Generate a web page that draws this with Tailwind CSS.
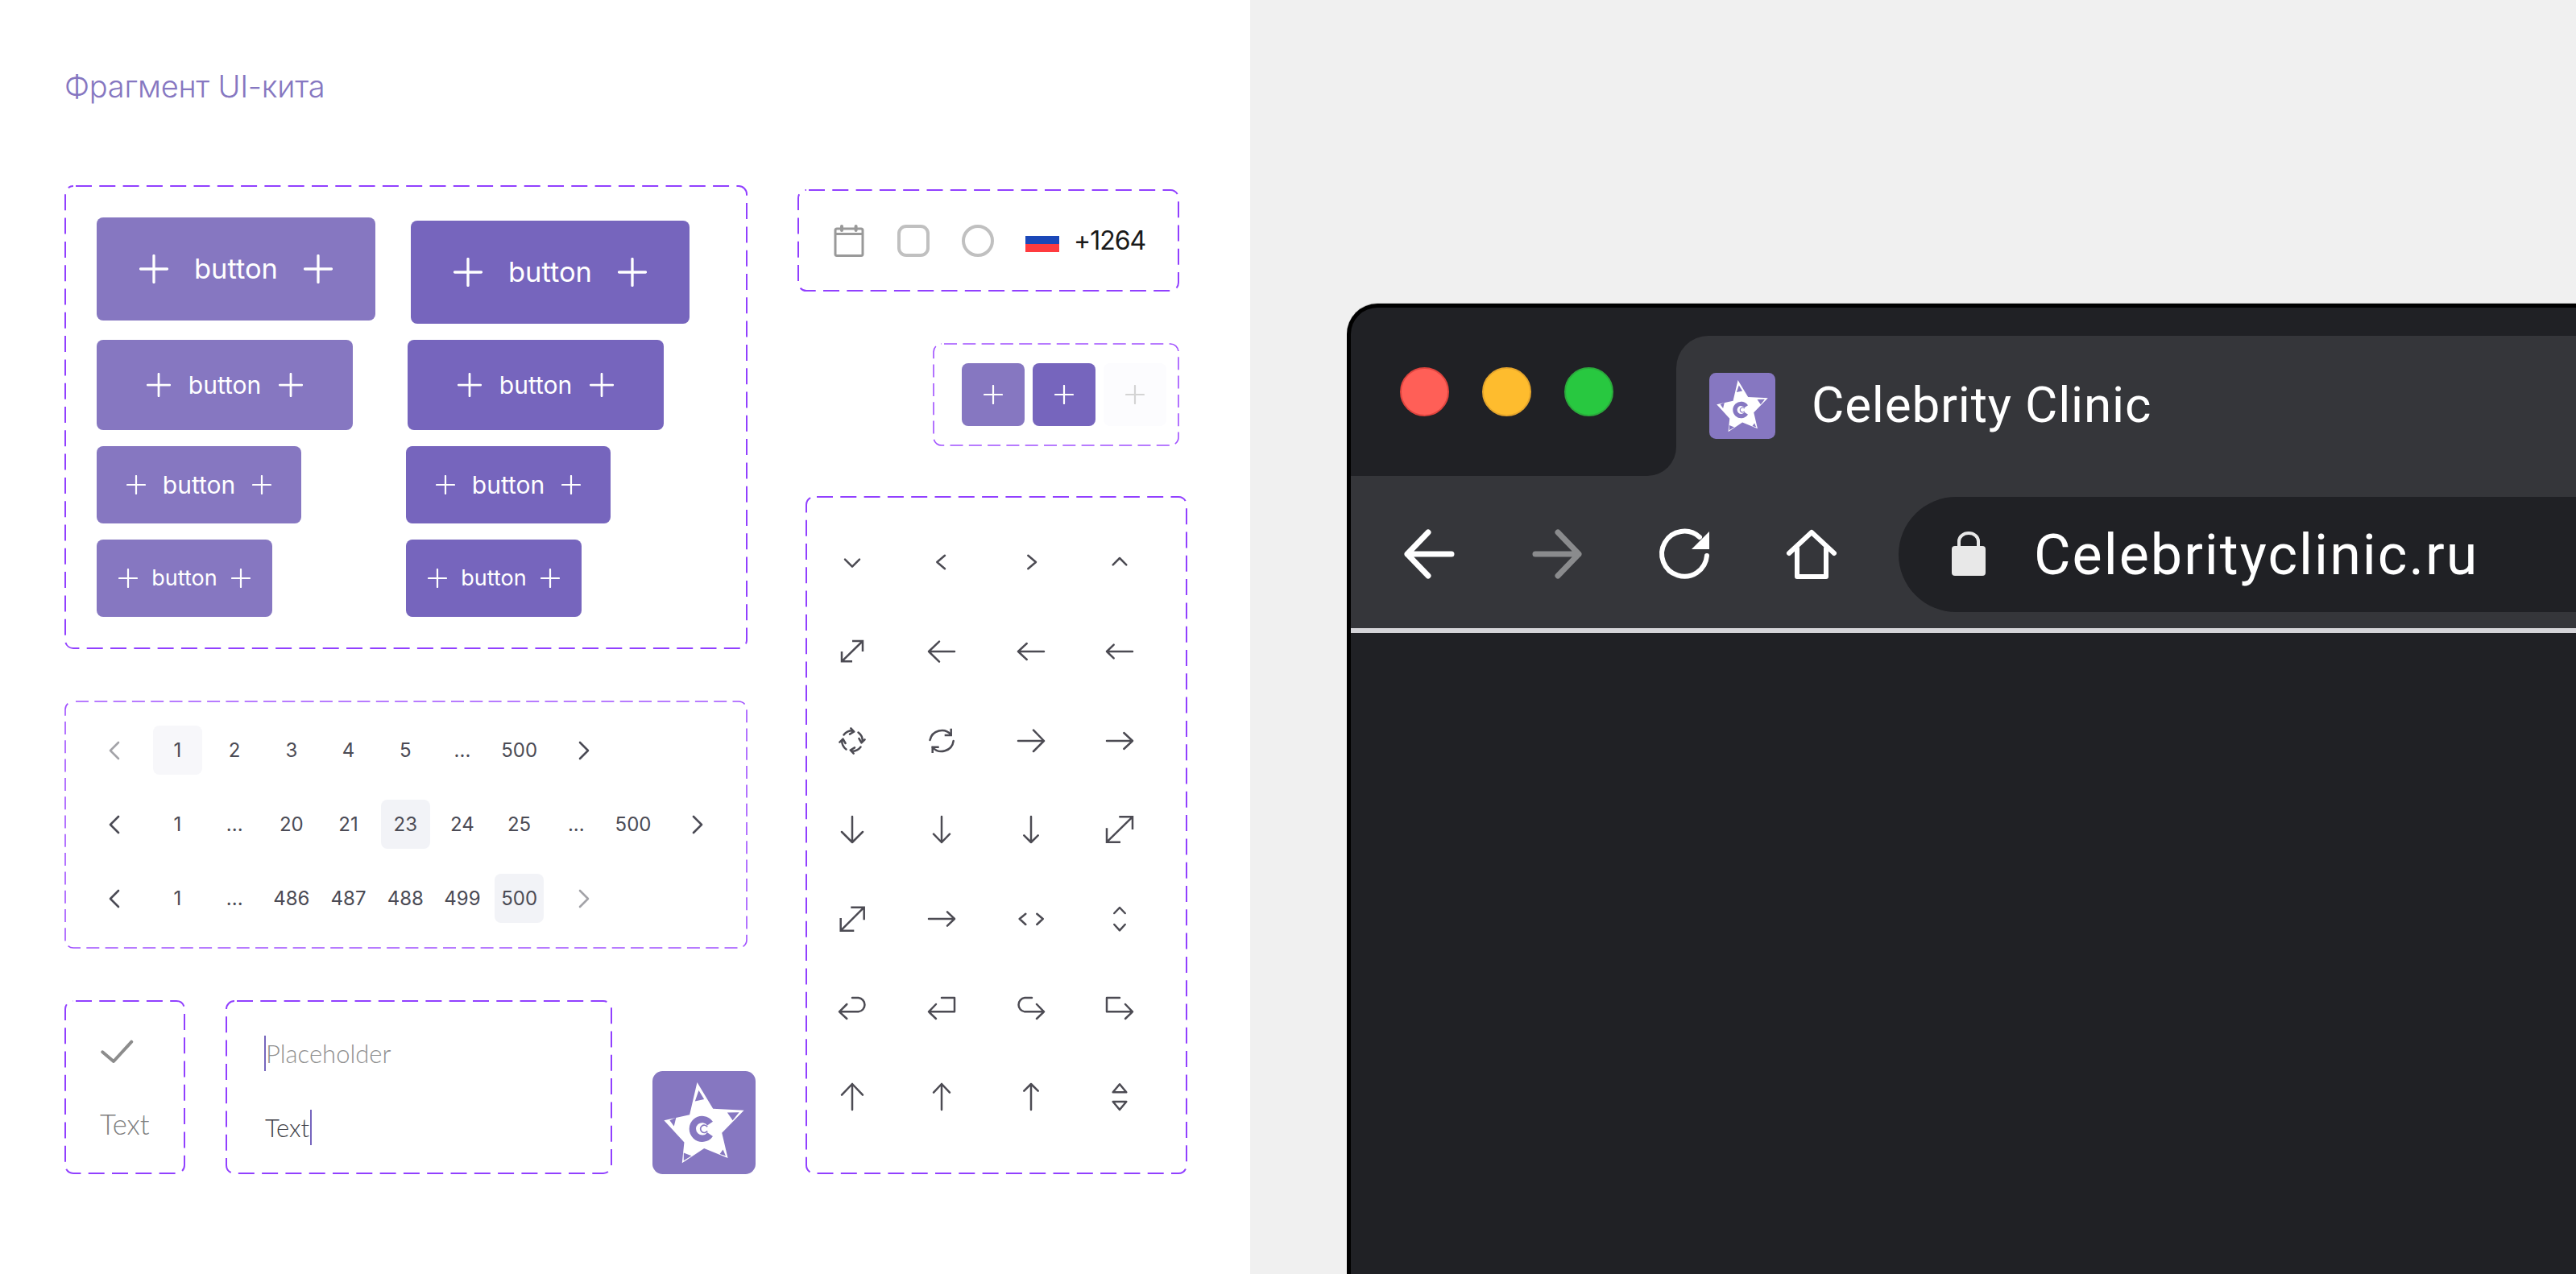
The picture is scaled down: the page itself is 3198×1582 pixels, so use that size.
<!DOCTYPE html>
<html lang="ru">
<head>
  <meta charset="UTF-8" />
  <title>Фрагмент UI-кита</title>
  <script src="https://cdn.jsdelivr.net/npm/@tailwindcss/browser@4"></script>
</head>
<body class="bg-white font-['Inter',sans-serif]">

  <!-- shared icons -->
  <svg class="absolute w-0 h-0">
    <symbol id="plus" viewBox="0 0 24 24"><path d="M12 1V23M1 12H23" fill="none" stroke="currentColor" stroke-width="2.2" stroke-linecap="round"/></symbol>
    <symbol id="prev" viewBox="0 0 61 61"><path d="M36 21L26 31L36 41" fill="none" stroke="currentColor" stroke-width="2.6" stroke-linecap="round" stroke-linejoin="round"/></symbol>
    <symbol id="next" viewBox="0 0 61 61"><path d="M26 21L36 31L26 41" fill="none" stroke="currentColor" stroke-width="2.6" stroke-linecap="round" stroke-linejoin="round"/></symbol>
    <symbol id="logo" viewBox="0 0 383 383">
      <rect width="383" height="383" rx="38" fill="#8677c1"/>
      <path d="M166 42L225 140L340 146L258 230L280 323L192 287L110 342L118 265L43 183L138 162Z" fill="#fff"/>
      <path d="M172 72L158 112L192 105ZM278 154L322 153L298 183ZM64 183L88 172L80 205ZM116 304L116 333L145 315ZM250 308L272 315L262 292Z" fill="#8677c1"/>
      <path d="M214 195A35.5 35.5 0 1 0 214 235" fill="none" stroke="#8677c1" stroke-width="25"/>
      <path d="M204 207A14 14 0 1 0 204 223" fill="none" stroke="#8677c1" stroke-width="5"/>
    </symbol>
  </svg>

  <div class="flex w-[3198px] h-[1582px] overflow-hidden">

    <!-- UI kit sheet -->
    <div class="w-[1552px] shrink-0 pl-[80px] pt-[80px] bg-white">
      <h1 class="h-[150px] pt-[2px] leading-[50px] text-[38px] font-light tracking-[-0.25px] text-[#8677c1]">Фрагмент UI-кита</h1>

      <div class="flex">
        <div class="w-[910px] shrink-0">

          <!-- buttons -->
          <div class="relative w-[848px] h-[576px] pl-[40px] pt-[40px] flex flex-col gap-[20px]">
            <svg class="absolute inset-0" width="848" height="576" fill="none"><rect x="1" y="1" width="846" height="574" rx="10" stroke="#9140ff" stroke-width="2" stroke-dasharray="20 9.3" stroke-dashoffset="-3"/></svg>
            <div class="flex items-start">
              <div class="w-[346px] h-[128px] rounded-[8px] bg-[#8677c1] text-white flex items-center justify-center gap-[32px] text-[34.5px]"><svg class="w-[36px] h-[36px]"><use href="#plus"/></svg><span>button</span><svg class="w-[36px] h-[36px]"><use href="#plus"/></svg></div>
              <div class="w-[346px] h-[128px] mt-[4px] ml-[44px] rounded-[8px] bg-[#7665bd] text-white flex items-center justify-center gap-[32px] text-[34.5px]"><svg class="w-[36px] h-[36px]"><use href="#plus"/></svg><span>button</span><svg class="w-[36px] h-[36px]"><use href="#plus"/></svg></div>
            </div>
            <div class="flex items-start">
              <div class="w-[318px] h-[112px] rounded-[8px] bg-[#8677c1] text-white flex items-center justify-center gap-[22px] text-[30px]"><svg class="w-[30px] h-[30px]"><use href="#plus"/></svg><span>button</span><svg class="w-[30px] h-[30px]"><use href="#plus"/></svg></div>
              <div class="w-[318px] h-[112px] ml-[68px] rounded-[8px] bg-[#7665bd] text-white flex items-center justify-center gap-[22px] text-[30px]"><svg class="w-[30px] h-[30px]"><use href="#plus"/></svg><span>button</span><svg class="w-[30px] h-[30px]"><use href="#plus"/></svg></div>
            </div>
            <div class="flex items-start">
              <div class="w-[254px] h-[96px] rounded-[8px] bg-[#8677c1] text-white flex items-center justify-center gap-[21px] text-[30px]"><svg class="w-[24px] h-[24px]"><use href="#plus"/></svg><span>button</span><svg class="w-[24px] h-[24px]"><use href="#plus"/></svg></div>
              <div class="w-[254px] h-[96px] ml-[130px] rounded-[8px] bg-[#7665bd] text-white flex items-center justify-center gap-[21px] text-[30px]"><svg class="w-[24px] h-[24px]"><use href="#plus"/></svg><span>button</span><svg class="w-[24px] h-[24px]"><use href="#plus"/></svg></div>
            </div>
            <div class="flex items-start">
              <div class="w-[218px] h-[96px] rounded-[8px] bg-[#8677c1] text-white flex items-center justify-center gap-[17px] text-[27px]"><svg class="w-[24px] h-[24px]"><use href="#plus"/></svg><span>button</span><svg class="w-[24px] h-[24px]"><use href="#plus"/></svg></div>
              <div class="w-[218px] h-[96px] ml-[166px] rounded-[8px] bg-[#7665bd] text-white flex items-center justify-center gap-[17px] text-[27px]"><svg class="w-[24px] h-[24px]"><use href="#plus"/></svg><span>button</span><svg class="w-[24px] h-[24px]"><use href="#plus"/></svg></div>
            </div>
          </div>

          <!-- pagination -->
          <div class="relative w-[848px] h-[308px] mt-[64px] pl-[31px] pt-[31px] flex flex-col gap-[31px] text-[24px] text-[#4b4b55]">
            <svg class="absolute inset-0" width="848" height="308" fill="none"><rect x="1" y="1" width="846" height="306" rx="10" stroke="#a050ff" stroke-width="1.6" stroke-dasharray="16 7.3" stroke-dashoffset="-3"/></svg>
            <div class="flex items-center gap-[9.7px] h-[61px]">
              <svg class="w-[61px] h-[61px] mr-[8.3px] text-[#a3a3a8]"><use href="#prev"/></svg>
              <div class="w-[61px] h-[61px] rounded-[8px] bg-[#f7f7fa] flex items-center justify-center">1</div>
              <div class="w-[61px] text-center">2</div>
              <div class="w-[61px] text-center">3</div>
              <div class="w-[61px] text-center">4</div>
              <div class="w-[61px] text-center">5</div>
              <div class="w-[61px] text-center">...</div>
              <div class="w-[61px] text-center">500</div>
              <svg class="w-[61px] h-[61px] ml-[9px]"><use href="#next"/></svg>
            </div>
            <div class="flex items-center gap-[9.7px] h-[61px]">
              <svg class="w-[61px] h-[61px] mr-[8.3px]"><use href="#prev"/></svg>
              <div class="w-[61px] text-center">1</div>
              <div class="w-[61px] text-center">...</div>
              <div class="w-[61px] text-center">20</div>
              <div class="w-[61px] text-center">21</div>
              <div class="w-[61px] h-[61px] rounded-[8px] bg-[#f2f3f7] flex items-center justify-center">23</div>
              <div class="w-[61px] text-center">24</div>
              <div class="w-[61px] text-center">25</div>
              <div class="w-[61px] text-center">...</div>
              <div class="w-[61px] text-center">500</div>
              <svg class="w-[61px] h-[61px] ml-[9px]"><use href="#next"/></svg>
            </div>
            <div class="flex items-center gap-[9.7px] h-[61px]">
              <svg class="w-[61px] h-[61px] mr-[8.3px]"><use href="#prev"/></svg>
              <div class="w-[61px] text-center">1</div>
              <div class="w-[61px] text-center">...</div>
              <div class="w-[61px] text-center">486</div>
              <div class="w-[61px] text-center">487</div>
              <div class="w-[61px] text-center">488</div>
              <div class="w-[61px] text-center">499</div>
              <div class="w-[61px] h-[61px] rounded-[8px] bg-[#f2f3f7] flex items-center justify-center">500</div>
              <svg class="w-[61px] h-[61px] ml-[9px] text-[#a3a3a8]"><use href="#next"/></svg>
            </div>
          </div>

          <!-- check, input, logo -->
          <div class="flex items-end mt-[64px] font-['Lato',sans-serif]">
            <div class="relative w-[150px] h-[216px] pl-[44px] pt-[48px]">
              <svg class="absolute inset-0" width="150" height="216" fill="none"><rect x="1" y="1" width="148" height="214" rx="10" stroke="#9140ff" stroke-width="2" stroke-dasharray="20 9.3" stroke-dashoffset="-3"/></svg>
              <svg class="w-[44px] h-[32px]" viewBox="0 0 44 32" fill="none"><path d="M3.2 16.3L17 28L39.3 3.7" stroke="#8c8c8c" stroke-width="4" stroke-linecap="round" stroke-linejoin="round"/></svg>
              <div class="mt-[54px] h-[40px] leading-[40px] text-[34.5px] font-light text-[#808080]">Text</div>
            </div>
            <div class="relative w-[480px] h-[216px] ml-[50px] pl-[48px] pt-[44px] flex flex-col gap-[48px] text-[31px] font-light">
              <svg class="absolute inset-0" width="480" height="216" fill="none"><rect x="1" y="1" width="478" height="214" rx="10" stroke="#9140ff" stroke-width="2" stroke-dasharray="20 9.3" stroke-dashoffset="-3"/></svg>
              <div class="flex items-center h-[44px] text-[#8f8f8f]"><span class="w-[2px] h-[44px] bg-[#7665bd]"></span>Placeholder</div>
              <div class="flex items-center h-[44px] pl-[1px] text-[#3f3f47]">Text<span class="w-[2px] h-[44px] ml-[1px] bg-[#7665bd]"></span></div>
            </div>
            <svg class="w-[128px] h-[128px] ml-[50px]"><use href="#logo"/></svg>
          </div>
        </div>

        <div class="w-[484px] shrink-0 pt-[5px]">

          <!-- form controls -->
          <div class="relative w-[474px] h-[127px] pl-[45px] flex items-center">
            <svg class="absolute inset-0" width="474" height="127" fill="none"><rect x="1" y="1" width="472" height="125" rx="10" stroke="#9140ff" stroke-width="2" stroke-dasharray="20 9.3" stroke-dashoffset="-3"/></svg>
            <svg class="w-[38px] h-[40px]" viewBox="0 0 38 40" fill="none" stroke="#999"><rect x="2" y="5" width="34" height="33.5" rx="2" stroke-width="3"/><path d="M2 11.5H36" stroke-width="3"/><path d="M10 2V7M27.6 2V7" stroke-width="4" stroke-linecap="round"/></svg>
            <div class="w-[40px] h-[40px] ml-[41px] rounded-[11px] border-[4px] border-[#c0c0c0]"></div>
            <div class="w-[40px] h-[40px] ml-[40px] rounded-full border-[4px] border-[#c0c0c0]"></div>
            <div class="w-[42px] ml-[39px] mt-[9px]"><div class="h-[10px] bg-[#1b48b8]"></div><div class="h-[10px] bg-[#ff3b3f]"></div></div>
            <div class="ml-[18px] text-[32px] tracking-[-1px] text-[#1a1a1a]">+1264</div>
          </div>

          <!-- square buttons -->
          <div class="relative w-[306px] h-[128px] ml-[168px] mt-[64px] pl-[36px] flex items-center gap-[10px]">
            <svg class="absolute inset-0" width="306" height="128" fill="none"><rect x="1" y="1" width="304" height="126" rx="10" stroke="#a050ff" stroke-width="1.6" stroke-dasharray="16 7.3" stroke-dashoffset="-3"/></svg>
            <div class="w-[78px] h-[78px] rounded-[8px] bg-[#8677c1] text-white flex items-center justify-center"><svg class="w-[24px] h-[24px]"><use href="#plus"/></svg></div>
            <div class="w-[78px] h-[78px] rounded-[8px] bg-[#7665bd] text-white flex items-center justify-center"><svg class="w-[24px] h-[24px]"><use href="#plus"/></svg></div>
            <div class="w-[78px] h-[78px] rounded-[8px] bg-[#fcfcfe] text-[#d4d4d4] flex items-center justify-center"><svg class="w-[24px] h-[24px]"><use href="#plus"/></svg></div>
          </div>

          <!-- icon set -->
          <div class="relative w-[474px] h-[842px] ml-[10px] mt-[62px] pl-[3px] pt-[27px]">
            <svg class="absolute inset-0" width="474" height="842" fill="none"><rect x="1" y="1" width="472" height="840" rx="10" stroke="#9140ff" stroke-width="2" stroke-dasharray="20 9.3" stroke-dashoffset="-3"/></svg>
            <div class="grid grid-cols-[repeat(4,110.67px)] auto-rows-[110.67px] place-items-center text-[#4c4b53]">
              <svg class="w-10 h-10" viewBox="-20 -20 40 40" fill="none" stroke="currentColor" stroke-width="2.5" stroke-linecap="round" stroke-linejoin="round"><path d="M-9 -3.3L0 5.7L9 -3.3"/></svg>
              <svg class="w-10 h-10" viewBox="-20 -20 40 40" fill="none" stroke="currentColor" stroke-width="2.5" stroke-linecap="round" stroke-linejoin="round"><path d="M4 -8.3L-5.7 0L4 8.3"/></svg>
              <svg class="w-10 h-10" viewBox="-20 -20 40 40" fill="none" stroke="currentColor" stroke-width="2.5" stroke-linecap="round" stroke-linejoin="round"><path d="M-3.7 -8.3L6 0L-3.7 8.3"/></svg>
              <svg class="w-10 h-10" viewBox="-20 -20 40 40" fill="none" stroke="currentColor" stroke-width="2.5" stroke-linecap="round" stroke-linejoin="round"><path d="M-8.3 3.3L0 -5L8.3 3.3"/></svg>

              <svg class="w-10 h-10" viewBox="-20 -20 40 40" fill="none" stroke="currentColor" stroke-width="2.5" stroke-linejoin="miter"><path d="M-13 0V12.3H0M0 -13H13V0M-13 12.3L13 -13"/></svg>
              <svg class="w-10 h-10" viewBox="-20 -20 40 40" fill="none" stroke="currentColor" stroke-width="2.5" stroke-linecap="round" stroke-linejoin="round"><path d="M-16 0H16M-3 -12.3L-16 0L-3 12.7"/></svg>
              <svg class="w-10 h-10" viewBox="-20 -20 40 40" fill="none" stroke="currentColor" stroke-width="2.5" stroke-linecap="round" stroke-linejoin="round"><path d="M-16 0H16M-5.3 -10L-16 0L-5.3 10"/></svg>
              <svg class="w-10 h-10" viewBox="-20 -20 40 40" fill="none" stroke="currentColor" stroke-width="2.5" stroke-linecap="round" stroke-linejoin="round"><path d="M-16 0H16M-7.3 -8.3L-16 0L-7.3 8.3"/></svg>

              <svg class="w-10 h-10" viewBox="-20 -20 40 40" fill="none" stroke="currentColor" stroke-width="2.5" stroke-linecap="round" stroke-linejoin="round"><path id="quarter" d="M-10.5 -7.5A13 13 0 0 1 0 -12.8M-1.7 -15.6L2.3 -11.5L-3 -8.4"/><use href="#quarter" transform="rotate(90)"/><use href="#quarter" transform="rotate(180)"/><use href="#quarter" transform="rotate(270)"/></svg>
              <svg class="w-10 h-10" viewBox="-20 -20 40 40" fill="none" stroke="currentColor" stroke-width="2.5" stroke-linecap="round"><path d="M-14.5 -1A15 15 0 0 1 11.7 -7.5"/><path d="M11.7 -15.3V-7H3.7M-11.3 15V7.7H-3.3" stroke-linecap="butt"/><path d="M14.7 0A15 15 0 0 1 -11.3 8"/></svg>
              <svg class="w-10 h-10" viewBox="-20 -20 40 40" fill="none" stroke="currentColor" stroke-width="2.5" stroke-linecap="round" stroke-linejoin="round"><path d="M-16 0H16M3 -13.3L16 0L3 13"/></svg>
              <svg class="w-10 h-10" viewBox="-20 -20 40 40" fill="none" stroke="currentColor" stroke-width="2.5" stroke-linecap="round" stroke-linejoin="round"><path d="M-16 0H16M5.3 -10L16 0L5.3 10"/></svg>

              <svg class="w-10 h-10" viewBox="-20 -20 40 40" fill="none" stroke="currentColor" stroke-width="2.5" stroke-linecap="round" stroke-linejoin="round"><path d="M0 -16V16M-13 3L0 16L13 3"/></svg>
              <svg class="w-10 h-10" viewBox="-20 -20 40 40" fill="none" stroke="currentColor" stroke-width="2.5" stroke-linecap="round" stroke-linejoin="round"><path d="M0 -16V16M-10 5.7L0 16L10 5.7"/></svg>
              <svg class="w-10 h-10" viewBox="-20 -20 40 40" fill="none" stroke="currentColor" stroke-width="2.5" stroke-linecap="round" stroke-linejoin="round"><path d="M0 -16V16M-8.7 7.3L0 16L8.7 7.3"/></svg>
              <svg class="w-10 h-10" viewBox="-20 -20 40 40" fill="none" stroke="currentColor" stroke-width="2.5"><path d="M-16 -1.7V15.7H1M-0.7 -15.7H16V0M-16 15.7L16 -15.7"/></svg>

              <svg class="w-10 h-10" viewBox="-20 -20 40 40" fill="none" stroke="currentColor" stroke-width="2.5"><path d="M-14.3 -1V14.7H2.3M-1.7 -14.3H14.7V1.3M-14.3 14.7L14.7 -14.3"/></svg>
              <svg class="w-10 h-10" viewBox="-20 -20 40 40" fill="none" stroke="currentColor" stroke-width="2.5" stroke-linecap="round" stroke-linejoin="round"><path d="M-16 0H16M7 -8.7L16 0L7 8.7"/></svg>
              <svg class="w-10 h-10" viewBox="-20 -20 40 40" fill="none" stroke="currentColor" stroke-width="2.5" stroke-linecap="round" stroke-linejoin="round"><path d="M-6.7 -6.3L-14.3 0L-6.7 7M7.3 -6.3L14.7 0L7.3 7"/></svg>
              <svg class="w-10 h-10" viewBox="-20 -20 40 40" fill="none" stroke="currentColor" stroke-width="2.5" stroke-linecap="round" stroke-linejoin="round"><path d="M-6.7 -7L0 -14L6.7 -7M-6.7 7L0 14.3L6.7 7"/></svg>

              <svg class="w-10 h-10" viewBox="-20 -20 40 40" fill="none" stroke="currentColor" stroke-width="2.5" stroke-linecap="round" stroke-linejoin="round"><path d="M-6.7 -5L-16 4.3L-6.7 13M-16 4.3H7.7A8.7 8.7 0 0 0 7.7 -13H0"/></svg>
              <svg class="w-10 h-10" viewBox="-20 -20 40 40" fill="none" stroke="currentColor" stroke-width="2.5" stroke-linecap="round" stroke-linejoin="round"><path d="M-7 -5L-16 4.3L-7 13M-16 4.3H16V-13H0"/></svg>
              <svg class="w-10 h-10" viewBox="-20 -20 40 40" fill="none" stroke="currentColor" stroke-width="2.5" stroke-linecap="round" stroke-linejoin="round"><path d="M7 -5L16 4.3L7 13M16 4.3H-7.7A8.7 8.7 0 0 1 -7.7 -13H1"/></svg>
              <svg class="w-10 h-10" viewBox="-20 -20 40 40" fill="none" stroke="currentColor" stroke-width="2.5" stroke-linecap="round" stroke-linejoin="round"><path d="M7 -5L16 4.3L7 13M16 4.3H-16V-13H0"/></svg>

              <svg class="w-10 h-10" viewBox="-20 -20 40 40" fill="none" stroke="currentColor" stroke-width="2.5" stroke-linecap="round" stroke-linejoin="round"><path d="M0 -16V16M-13 -2.3L0 -16L13 -2.3"/></svg>
              <svg class="w-10 h-10" viewBox="-20 -20 40 40" fill="none" stroke="currentColor" stroke-width="2.5" stroke-linecap="round" stroke-linejoin="round"><path d="M0 -16V16M-10 -5.3L0 -16L10 -5.3"/></svg>
              <svg class="w-10 h-10" viewBox="-20 -20 40 40" fill="none" stroke="currentColor" stroke-width="2.5" stroke-linecap="round" stroke-linejoin="round"><path d="M0 -16V16M-8.7 -7.3L0 -16L8.7 -7.3"/></svg>
              <svg class="w-10 h-10" viewBox="-20 -20 40 40" fill="none" stroke="currentColor" stroke-width="2.5" stroke-linecap="round" stroke-linejoin="round"><path d="M-8.3 -5.7L0 -15.7L8.3 -5.7ZM-8.3 6L0 16L8.3 6Z"/></svg>
            </div>
          </div>
        </div>
      </div>
    </div>

    <!-- browser mockup -->
    <div class="flex-1 bg-[#f0f0f0] pl-[120px] pt-[377px]">
      <div class="h-[1300px] border-l-[5px] border-t-[5px] border-black rounded-tl-[38px] bg-[#202125] font-['Roboto',sans-serif] text-white shadow-[0_-1px_0_#c8c8c8]">
        <div class="h-[35px]"></div>
        <div class="flex h-[174px]">
          <div class="w-[404px] bg-[#35363a]">
            <div class="h-full bg-[#202125] rounded-br-[36px] pl-[61px] pt-[39px] flex gap-[41px]">
              <div class="w-[61px] h-[61px] rounded-full bg-[#ff5f57] border-[2px] border-[#e0443e]"></div>
              <div class="w-[61px] h-[61px] rounded-full bg-[#febc2e] border-[2px] border-[#e5a52b]"></div>
              <div class="w-[61px] h-[61px] rounded-full bg-[#28c840] border-[2px] border-[#2ba93c]"></div>
            </div>
          </div>
          <div class="flex-1 bg-[#35363a] rounded-tl-[40px] pl-[41px] pt-[46px] flex items-start">
            <svg class="w-[82px] h-[82px]"><use href="#logo"/></svg>
            <div class="ml-[45px] -mt-[5px] h-[90px] leading-[90px] text-[62px] tracking-[0.8px] whitespace-nowrap">Celebrity Clinic</div>
          </div>
        </div>
        <div class="h-[189px] bg-[#35363a] pl-[63px] pt-[5px] flex items-center gap-[88px]">
          <svg class="w-[70px] h-[70px] shrink-0" viewBox="0 0 70 70" fill="none" stroke="#fff" stroke-width="7" stroke-linecap="round" stroke-linejoin="round"><path d="M33 8L7 35L33 62M7 35H62"/></svg>
          <svg class="w-[70px] h-[70px] shrink-0" viewBox="0 0 70 70" fill="none" stroke="#8a8b8d" stroke-width="7" stroke-linecap="round" stroke-linejoin="round"><path d="M36 8L62 35L36 62M62 35H8"/></svg>
          <svg class="w-[70px] h-[70px] shrink-0" viewBox="0 0 70 70" fill="none"><path d="M63 37A28 28 0 1 1 54 14" stroke="#fff" stroke-width="6" stroke-linecap="round"/><path d="M66 7V29H44Z" fill="#fff"/></svg>
          <svg class="w-[70px] h-[70px] shrink-0" viewBox="0 0 70 70" fill="none" stroke="#fff" stroke-width="6" stroke-linecap="round" stroke-linejoin="round"><path d="M7 34L35 8L63 34M17 28V63H53V28"/></svg>
          <div class="flex-1 h-[143px] -ml-[15px] rounded-l-full bg-[#202125] pl-[66px] flex items-center">
            <svg class="w-[42px] h-[56px] shrink-0" viewBox="0 0 42 56" fill="none"><path d="M9 20V12A12 10 0 0 1 33 12V20" stroke="#e8e8e8" stroke-width="4"/><rect y="18" width="42" height="37" rx="4" fill="#e8e8e8"/></svg>
            <div class="ml-[60px] mt-[2px] text-[70px] tracking-[2px] whitespace-nowrap">Celebrityclinic.ru</div>
          </div>
        </div>
        <div class="h-[6px] bg-[#d4d4d8]"></div>
      </div>
    </div>
  </div>
</body>
</html>
